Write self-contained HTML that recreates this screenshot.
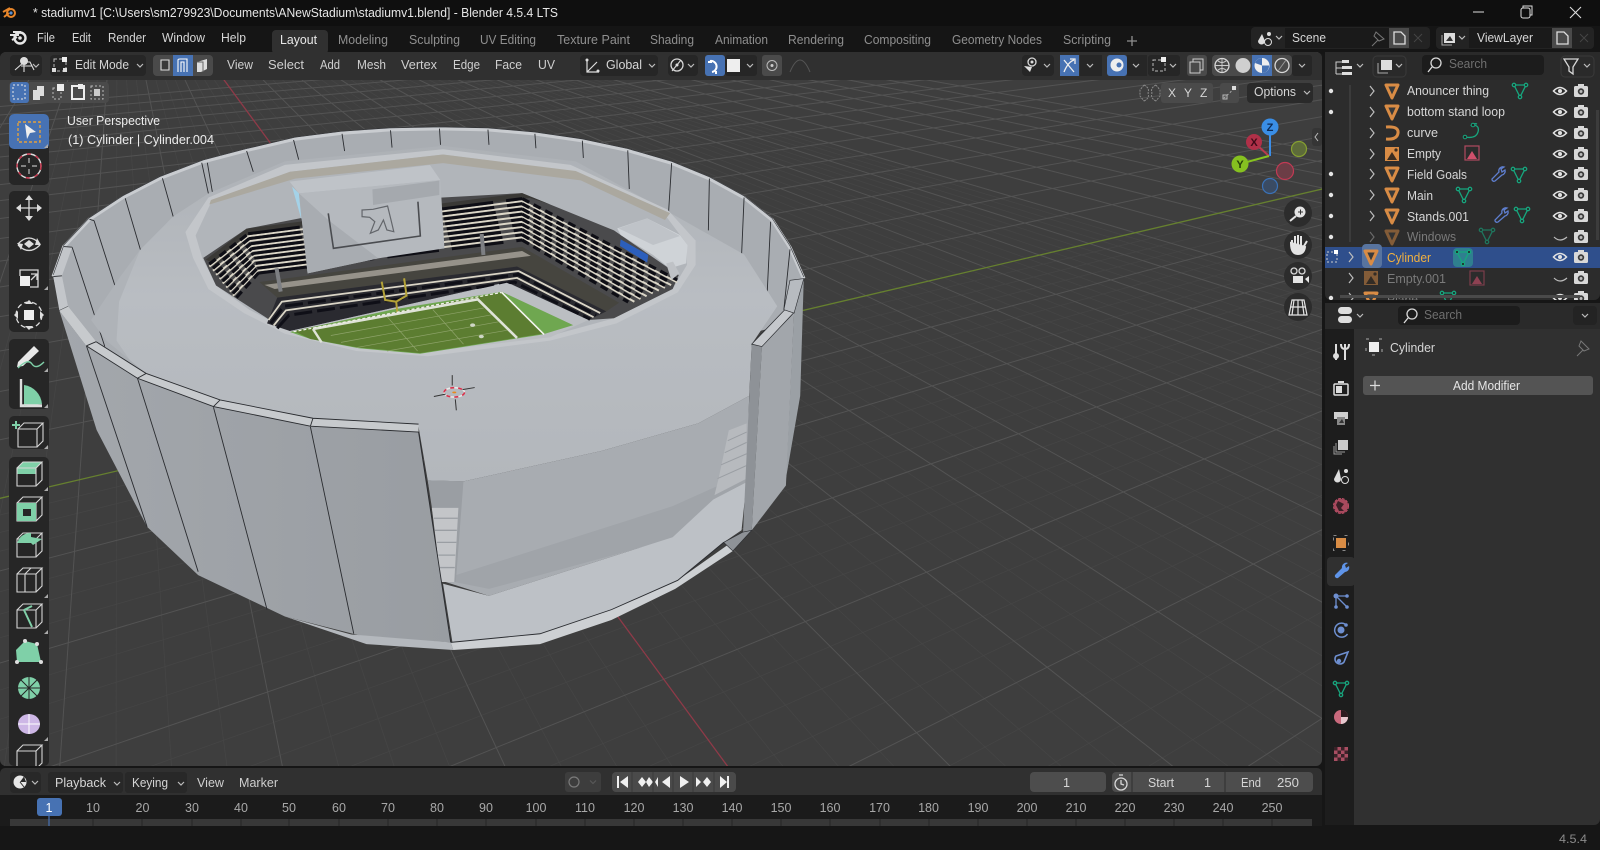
<!DOCTYPE html>
<html><head><meta charset="utf-8"><title>Blender</title>
<style>
html,body{margin:0;padding:0;background:#161616;overflow:hidden}
svg{display:block;font-family:"Liberation Sans",sans-serif}
text{font-size:12.5px;fill:#d6d6d6}
.st *{vector-effect:non-scaling-stroke}
.mu{fill:#cfcfcf}
.tab{fill:#8f8f8f}
.l{stroke:#2a2c30;stroke-width:.9;fill:none}
.ic{fill:none;stroke:#d8d8d8;stroke-width:1.3}
.cub{fill:none;stroke:#d6d6d6;stroke-width:1.1}
.gr{fill:#7fd0a8}
.chev{fill:none;stroke:#bdbdbd;stroke-width:1.2}
.btn{fill:#262626}
</style></head><body>
<svg width="1600" height="850" viewBox="0 0 1600 850" xmlns="http://www.w3.org/2000/svg">
<defs>
<clipPath id="vp"><rect x="0" y="52" width="1322" height="714" rx="6"/></clipPath>
<clipPath id="ol"><rect x="1325" y="52" width="275" height="248"/></clipPath>
<linearGradient id="dome" x1="0" y1="0" x2="0" y2="1"><stop offset="0" stop-color="#adb1b6"/><stop offset=".45" stop-color="#b9bdc2"/><stop offset="1" stop-color="#b3b7bc"/></linearGradient>
<linearGradient id="pan" x1="0" y1="0" x2="1" y2="0"><stop offset="0" stop-color="#a3a7ac"/><stop offset="1" stop-color="#999da2"/></linearGradient>
<g id="tri"><path d="M-6 -6H6L0 7Z" fill="#3a3a3a" stroke="#d98c45" stroke-width="3" stroke-linejoin="round"/></g>
<g id="mesh" fill="none" stroke="#17a67e" stroke-width="1.3"><path d="M-6 -5H6L0 7Z"/><circle cx="-6" cy="-5" r="1.7" fill="#222"/><circle cx="6" cy="-5" r="1.7" fill="#222"/><circle cx="0" cy="7" r="1.7" fill="#222"/></g>
<g id="eye"><path d="M-6.5 0Q0 -7 6.5 0Q0 7 -6.5 0Z" fill="none" stroke="#e2e2e2" stroke-width="1.6"/><circle r="2" fill="#e2e2e2"/></g>
<g id="cam"><rect x="-7" y="-5" width="14" height="11" rx="1.5" fill="#d8d8d8"/><rect x="-3" y="-7" width="6" height="3" fill="#d8d8d8"/><circle cy="0.5" r="3.2" fill="#3a3a3a"/><circle cy="0.5" r="1.5" fill="#bbb"/></g>
<g id="wr"><path d="M6 -7A4 4 0 0 0 1 -2L-6 5A2 2 0 0 0 -3 7L4 1A4 4 0 0 0 7 -4L4 -2L3 -5Z" fill="none" stroke="#5f7fd0" stroke-width="1.3"/></g>
<g id="emp"><rect x="-7" y="-7" width="14" height="14" fill="#d98c45"/><path d="M-5 6L0 -2L5 6Z" fill="#3a2c20"/><circle cx="4" cy="-4" r="1.6" fill="#3a2c20"/></g>
<g id="empc"><rect x="-7" y="-7" width="14" height="14" fill="none" stroke="#b04a60" stroke-width="1.2"/><path d="M-5 6L0 -2L5 6Z" fill="#d0506c"/></g>
<g id="cube"><path class="cub" d="M-12 -6H7V12H-12ZM-12 -6L-6 -12H13L7 -6M13 -12V6L7 12"/></g>
</defs>

<rect width="1600" height="850" fill="#161616"/>
<rect width="1600" height="26" fill="#0f0f0f"/>
<rect y="26" width="1600" height="28" fill="#151515"/>

<!-- title -->
<g transform="translate(10 13)"><circle r="4" cx="1" fill="none" stroke="#e8862a" stroke-width="2"/><path d="M-7 -1L0 -5M-6 4L-1 0" stroke="#e8862a" stroke-width="2"/><circle cx="1" r="1.6" fill="#5a8fd0"/></g>
<text x="33" y="17" textLength="525" lengthAdjust="spacingAndGlyphs" style="fill:#e6e6e6">* stadiumv1 [C:\Users\sm279923\Documents\ANewStadium\stadiumv1.blend] - Blender 4.5.4 LTS</text>
<path d="M1473 12H1484" stroke="#ddd" stroke-width="1"/>
<rect x="1521" y="8" width="9" height="10" rx="2" fill="none" stroke="#ddd"/><path d="M1523 8V6H1532V15H1530" fill="none" stroke="#ddd"/>
<path d="M1570 7L1581 18M1581 7L1570 18" stroke="#ddd" stroke-width="1.1"/>

<!-- top bar -->
<g transform="translate(19 38)"><circle cx="1" r="5.5" fill="none" stroke="#e6e6e6" stroke-width="2.4"/><path d="M-9 -3H0M-7 2L-2 -1M-6 -6H2" stroke="#e6e6e6" stroke-width="2"/><circle cx="1" r="1.8" fill="#e6e6e6"/></g>
<text x="37" y="42" textLength="18" lengthAdjust="spacingAndGlyphs">File</text>
<text x="72" y="42" textLength="19" lengthAdjust="spacingAndGlyphs">Edit</text>
<text x="108" y="42" textLength="38" lengthAdjust="spacingAndGlyphs">Render</text>
<text x="162" y="42" textLength="43" lengthAdjust="spacingAndGlyphs">Window</text>
<text x="221" y="42" textLength="25" lengthAdjust="spacingAndGlyphs">Help</text>
<rect x="272" y="30" width="56" height="24" rx="4" fill="#303030"/>
<text x="280" y="44" textLength="37" lengthAdjust="spacingAndGlyphs" style="fill:#e8e8e8">Layout</text>
<text class="tab" x="338" y="44" textLength="50" lengthAdjust="spacingAndGlyphs">Modeling</text>
<text class="tab" x="409" y="44" textLength="51" lengthAdjust="spacingAndGlyphs">Sculpting</text>
<text class="tab" x="480" y="44" textLength="56" lengthAdjust="spacingAndGlyphs">UV Editing</text>
<text class="tab" x="557" y="44" textLength="73" lengthAdjust="spacingAndGlyphs">Texture Paint</text>
<text class="tab" x="650" y="44" textLength="44" lengthAdjust="spacingAndGlyphs">Shading</text>
<text class="tab" x="715" y="44" textLength="53" lengthAdjust="spacingAndGlyphs">Animation</text>
<text class="tab" x="788" y="44" textLength="56" lengthAdjust="spacingAndGlyphs">Rendering</text>
<text class="tab" x="864" y="44" textLength="67" lengthAdjust="spacingAndGlyphs">Compositing</text>
<text class="tab" x="952" y="44" textLength="90" lengthAdjust="spacingAndGlyphs">Geometry Nodes</text>
<text class="tab" x="1063" y="44" textLength="48" lengthAdjust="spacingAndGlyphs">Scripting</text>
<path d="M1127 41H1137M1132 36V46" stroke="#8f8f8f" stroke-width="1.3"/>
<!-- scene selectors -->
<rect x="1251" y="27" width="179" height="22" rx="4" fill="#232323"/>
<rect x="1285" y="28" width="104" height="20" fill="#1a1a1a"/>
<rect x="1389" y="28" width="20" height="20" fill="#4a4a4a"/>
<path d="M1262 34L1258 41A3.5 3.5 0 0 0 1265 41Z" fill="#ddd"/><circle cx="1269" cy="34" r="2" fill="#ddd"/><circle cx="1268" cy="42" r="3.5" fill="none" stroke="#ddd"/>
<path class="chev" d="M1276 36L1279 39L1282 36"/>
<text x="1292" y="42" textLength="34" lengthAdjust="spacingAndGlyphs">Scene</text>
<path d="M1372 46L1378 40M1376 32L1384 39L1379 41L1374 36Z" fill="none" stroke="#777"/>
<path d="M1394 32H1401L1405 36V44H1394Z" fill="none" stroke="#ddd" stroke-width="1.3"/>
<path d="M1414 34L1422 42M1422 34L1414 42" stroke="#444"/>
<rect x="1436" y="27" width="158" height="22" rx="4" fill="#232323"/>
<rect x="1469" y="28" width="83" height="20" fill="#1a1a1a"/>
<rect x="1552" y="28" width="20" height="20" fill="#4a4a4a"/>
<rect x="1444" y="33" width="11" height="10" fill="#ddd"/><path d="M1442 35V45H1452" fill="none" stroke="#aaa"/><path d="M1446 41L1450 36L1453 41Z" fill="#333"/>
<path class="chev" d="M1459 36L1462 39L1465 36"/>
<text x="1477" y="42" textLength="56" lengthAdjust="spacingAndGlyphs">ViewLayer</text>
<path d="M1557 32H1564L1568 36V44H1557Z" fill="none" stroke="#ddd" stroke-width="1.3"/>
<path d="M1580 34L1588 42M1588 34L1580 42" stroke="#444"/>

<!-- VIEWPORT -->
<g clip-path="url(#vp)">
<rect x="0" y="52" width="1322" height="714" fill="#3e3e3e"/>
<!-- minor grid -->
<path fill="none" stroke="#454545" stroke-width=".8" d="M117-66L850 850M117-66L911 850M117-66L972 850M117-66L1095 850M117-66L1156 850M117-66L1217 850M117-66L1340 850M117-66L1401 850M117-66L1462 850M117-66L1585 850M117-66L1646 850M117-66L1707 850M117-66L1830 850M117-66L1891 850M117-66L1952 850M117-66L2075 850M117-66L2136 850M117-66L2197 850M117-66L2320 850M117-66L2381 850M117-66L2442 850M117-66L2565 850M117-66L2626 850M117-66L2687 850M117-66L2810 850M117-66L2871 850M117-66L2932 850M117-66L3055 850M117-66L3116 850M117-66L3177 850M117-66L728 850M117-66L667 850M117-66L606 850M117-66L483 850M117-66L422 850M117-66L361 850M117-66L238 850M117-66L177 850M117-66L116 850M117-66L-7 850M117-66L-68 850M117-66L-129 850
M2600-110L354 850M2600-110L463 850M2600-110L573 850M2600-110L791 850M2600-110L900 850M2600-110L1010 850M2600-110L1228 850M2600-110L1337 850M2600-110L1447 850M2600-110L136 850M2600-110L26 850M2600-110L-83 850M2600-110L-301 850M2600-110L-410 850M2600-110L-520 850M2600-110L-738 850M2600-110L-847 850M2600-110L-957 850M2600-110L-1175 850M2600-110L-1285 850M2600-110L-1394 850"/>
<!-- major grid -->
<path fill="none" stroke="#535353" stroke-width="1" d="M117-66L-926 850M117-66L-681 850M117-66L-436 850M117-66L-191 850M117-66L54 850M117-66L299 850M117-66L544 850M117-66L1034 850M117-66L1279 850M117-66L1524 850M117-66L1769 850M117-66L2014 850M117-66L2259 850M117-66L2504 850M117-66L2749 850M117-66L2994 850M117-66L3239 850M117-66L3484 850M117-66L3729 850M117-66L3974 850M117-66L4219 850M117-66L4464 850M117-66L4709 850M117-66L4954 850M117-66L5199 850
M2600-110L-1066 850M2600-110L-629 850M2600-110L-192 850M2600-110L245 850M2600-110L682 850M2600-110L1119 850M2600-110L1556 850M2600-110L1993 850M2600-110L-1940 850M2600-110L-2377 850M2600-110L-2814 850M2600-110L-3251 850M2600-110L-3688 850M2600-110L-4125 850M2600-110L-4562 850M2600-110L-4999 850M2600-110L-5436 850M2600-110L-5873 850M2600-110L-6310 850M2600-110L-6747 850M2600-110L-7184 850M2600-110L-7621 850M2600-110L-8058 850M2600-110L-8495 850M2600-110L-8932 850"/>
<path d="M117 -66L789 850" stroke="#8f3a48" stroke-width="1.3"/>
<path d="M-1503 850L2600 -110" stroke="#66802f" stroke-width="1.3"/>

<!-- stadium -->
<g class="st" transform="translate(40 120) scale(.5102 .3448)">
<!-- back wall -->
<path d="M26 454L47 367L97 288L162 225L235 169L320 121L405 88L500 55L590 38L685 28L783 25L878 28L970 40L1063 60L1152 88L1238 125L1312 170L1380 225L1435 290L1470 370L1497 460L1480 560L1440 600L742 890L353 815L208 740L110 650L40 556Z" fill="#a9adb2"/>
<path d="M26 454L47 367L97 288L162 225L235 169L320 121L405 88L500 55L590 38L685 28L783 25L878 28L970 40L1063 60L1152 88L1238 125L1312 170L1380 225L1435 290L1470 370L1497 460" fill="none" stroke="#c9ccd0" stroke-width="3.500"/>
<path d="M26 454L47 367L97 288L162 225L235 169L320 121L405 88L500 55L590 38L685 28L783 25L878 28L970 40L1063 60L1152 88L1238 125L1312 170L1380 225L1435 290L1470 370L1497 460" fill="none" stroke="#2e3034" stroke-width=".6" transform="translate(0 -5)"/>
<path class="l" d="M63 369L127 657M106 292L157 527M167 227L197 377M240 169L261 280M317 124L330 213M328 124L338 210M405 90L418 150M497 58L507 115M592 40L597 90M687 30L690 80M783 25L785 72M878 28L880 72M970 40L972 82M1063 60L1065 110M1152 88L1155 200M1238 125L1232 268M1312 170L1310 320M1380 225L1375 395M1432 295L1425 510M1470 375L1458 550"/>
<!-- left rim end -->
<path d="M26 454L47 367L63 369L43 452L55 541L110 643L91 655L38 553Z" fill="#c3c6ca"/>
<path class="l" d="M47 367L63 369M26 454L43 452M38 553L55 541M97 288L106 292"/>
<!-- soft dome shoulder -->
<path d="M100 580L157 455L196 377L157 527L155 640L176 696L130 640Z" fill="#afb3b8"/>
<!-- dome -->
<path d="M176 696L150 640L155 527L196 377L261 280L330 213L480 120L790 75L1050 120L1230 265L1380 390L1445 540L1395 650L1390 800L1290 880L1100 960L830 1048L760 1045L742 890L530 865L340 825L208 735Z" fill="url(#dome)"/>
<!-- ledge -->
<path d="M285 325L330 225L480 130L790 85L1040 130L1230 260L1285 350L1285 420L1250 500L1130 590L1000 640L760 685L620 670L480 620L400 560L330 490L300 400Z" fill="#c3c6ca"/>
<!-- interior wall -->
<path d="M305 335L335 240L490 150L790 100L1040 148L1225 275L1268 360L1268 420L1240 490L1125 575L995 628L755 672L625 658L490 610L410 550L345 480L318 400Z" fill="#b1b5ba"/>
<path d="M335 232L490 150L790 100L1050 148L1235 270L1225 290L1060 175L790 125L500 170L332 245Z" fill="#aba89f"/>
<!-- seats -->
<path d="M320 400L405 315L510 285L785 225L945 212L1125 320L1252 450L1240 490L1125 575L1075 580L915 470L490 612L470 600L440 570L345 480Z" fill="#4a4a4c"/>
<path d="M325 405L405 315L945 212L1000 245L960 226L430 325L345 420Z" fill="#3a3936"/>
<!-- cream rows -->
<path fill="none" stroke="#dcd7c8" stroke-width="2" transform="translate(0 7)" d="M332 418L408 330L945 228L1249 464M339 430L410 344L945 243L1237 472M345 442L413 359L945 258L1225 480M352 454L415 373L945 273L1213 488M358 467L418 387L945 288L1201 496M365 479L420 401L945 303L1189 504M372 491L423 416L945 318L1177 512M378 503L426 430L945 333L1165 520"/>
<!-- dark dashes, sides -->
<path fill="none" stroke="#0e0e15" stroke-width="3.200" stroke-dasharray="8 5" d="M332 418L408 330M945 228L1249 464M339 430L410 344M945 243L1237 472M345 442L413 359M945 258L1225 480M352 454L415 373M945 273L1213 488M358 467L418 387M945 288L1201 496M365 479L420 401M945 303L1189 504M372 491L423 416M945 318L1177 512M378 503L426 430M945 333L1165 520M385 515L428 444M945 348L1153 528"/>
<!-- dark dashes, centre -->
<path fill="none" stroke="#0e0e15" stroke-width="3" stroke-dasharray="52 13" d="M408 330L945 228M410 344L945 243M413 359L945 258M415 373L945 273M418 387L945 288M420 401L945 303M423 416L945 318M426 430L945 333M428 444L945 348"/>
<!-- concourse -->
<path d="M430 470L945 368L1135 530L1110 555L935 425L465 515Z" fill="#46453f"/>
<path d="M440 478L945 380L962 394L460 490Z" fill="#96928a"/>
<!-- lower tier -->
<path d="M465 515L935 425L1110 555L1075 580L915 470L490 612L445 590Z" fill="#2a2a30"/>
<g fill="none" stroke="#dad5c6" stroke-width="1.800">
<path d="M448 580L474 527L938 438L1098 560"/>
<path d="M458 596L482 552L935 458L1085 572"/>
</g>
<g fill="none" stroke="#0f0f17" stroke-width="3" stroke-dasharray="18 5">
<path d="M452 590L478 540L938 448L1090 566"/>
<path d="M465 604L488 566L930 470L1078 578"/>
</g>
<!-- concrete -->
<path d="M490 612L915 472L1075 580L1000 630L760 672L625 658Z" fill="#bbbec2"/>
<!-- field -->
<path d="M490 615L690 550L905 498L1045 595L985 622L745 678L625 662L530 635Z" fill="#6fa750"/>
<path d="M497 612L905 500L985 620L745 676L625 660L530 635Z" fill="#5c7d31"/>
<path d="M535 606L858 520L935 632" fill="none" stroke="#dfe3d8" stroke-width="2.600"/>
<path d="M535 606L552 645" stroke="#dfe3d8" stroke-width="2.400"/>
<path d="M905 500L988 622" stroke="#f4f4f0" stroke-width="1.600"/>
<path d="M497 614L905 500" stroke="#f0f0e8" stroke-width="1.200" stroke-dasharray="3 2"/>
<g stroke="#8ea36a" stroke-width=".7"><path d="M570 625L870 545M590 645L885 565M620 660L900 585M680 670L915 610M680 570L740 670M770 550L830 650"/></g>
<circle cx="848" cy="595" r="5" fill="#cfd6c6"/><circle cx="865" cy="628" r="5" fill="#cfd6c6"/>
</g>

<g class="st" transform="translate(180 130) scale(.3448 .3333)">
<path d="M585 455L595 510L627 515L657 497L650 445M627 515L630 545" fill="none" stroke="#b3a238" stroke-width="2"/>
<path d="M875 312L880 375" stroke="#7d7f83" stroke-width="4"/>
<path d="M280 415L292 485" stroke="#7d7f83" stroke-width="4"/>
<path d="M325 170L345 190L352 268Z" fill="#a4d2e8"/>
<path d="M318 155L725 105L755 150L345 190Z" fill="#bfc3c8"/>
<path d="M345 190L755 150L767 355L575 385L370 430Z" fill="#b5b9be"/>
<path d="M345 190L430 270L575 385L370 430Z" fill="#a8acb1"/>
<path d="M558 178L752 152V195L560 225Z" fill="#a5a9ae"/>
<path d="M430 250L445 355L697 318L690 215" fill="none" stroke="#4a4c50" stroke-width="1.600"/>
<path d="M528 240L560 238L602 228L612 270L620 305L600 300L590 270L575 300L552 310L565 275L550 262L528 260Z" fill="none" stroke="#63666b" stroke-width="1.200"/>
<path d="M1268 295L1355 265L1450 315L1472 345L1468 400L1420 415L1372 375L1278 315Z" fill="#cfd3d7"/>
<path d="M1272 295L1355 265L1450 318L1372 345Z" fill="#bfc3c8"/>
<path d="M1278 328L1358 375L1355 398L1276 348Z" fill="#2c5fbc"/>
<path d="M1410 400L1430 395L1448 430L1425 450Z" fill="#bfc2c6"/>
</g>

<g class="st" transform="translate(40 120) scale(.5102 .3448)">
<!-- glass -->
<path d="M760 1045L830 1048L1100 960L1290 880L1390 800L1385 1050L1320 1100L1240 1210L880 1380L795 1340Z" fill="#a8acb1"/>
<path d="M815 1320L1240 1120L1390 1020L1385 1050L1320 1100L1240 1215L880 1360L812 1340Z" fill="#a0a4a9"/>
<path d="M760 1045L830 1048L815 1340L790 1340Z" fill="#9a9ea3"/>
<path d="M768 1125H820L812 1340H786Z" fill="#c3c5c8"/>
<g stroke="#9a9ea3" stroke-width="1.300"><path d="M772 1155H819M774 1190H817M778 1225H816M781 1262H814M784 1298H813"/></g>
<path d="M1350 900L1385 880V1040L1322 1088L1330 1040Z" fill="#b7babe"/>
<g stroke="#9a9ea3" stroke-width="1"><path d="M1348 930L1385 905M1342 965L1385 935M1335 1000L1385 968M1328 1040L1385 1002"/></g>
<!-- plaza -->
<path d="M790 1345L880 1380L1240 1210L1320 1100L1385 1050L1375 1190L1340 1225L1250 1335L1120 1420L980 1490L810 1530Z" fill="#bdc1c6"/>
<path d="M805 1515L980 1490L1120 1420L1250 1335L1355 1225L1358 1250L1245 1360L1120 1450L980 1520L810 1537Z" fill="#cdd0d3"/>
<path class="l" d="M805 1515L980 1490L1120 1420L1250 1335L1340 1225"/>
<!-- right panels -->
<path d="M1497 460L1490 800L1462 1040L1478 560Z" fill="#9ba0a5"/>
<path d="M1415 655L1478 560L1462 1060L1395 1190Z" fill="#a2a6ab"/>
<path d="M1395 650L1415 655L1395 1190L1378 1195Z" fill="#8e9297"/>
<path d="M1395 650L1460 550L1478 558L1415 657Z" fill="#c5c8cc" stroke="#2a2c30" stroke-width=".7"/>
<path d="M1458 550L1470 465L1497 460L1478 560Z" fill="#b7bbc0" stroke="#2a2c30" stroke-width=".6"/>
<path d="M1378 1195L1340 1225L1358 1250L1395 1190Z" fill="#8e9297" stroke="#2a2c30" stroke-width=".6"/>
<!-- left front panels -->
<path d="M38 553L91 655L191 749L340 831L530 888L742 905L805 1515L640 1500L480 1440L310 1320L210 1180L111 899Z" fill="url(#pan)"/>
<path d="M480 1440L610 1492L805 1515L810 1537L640 1520Z" fill="#b4b8bd"/>
<path d="M55 541L110 643L208 735L353 812L535 865L742 882L742 905L530 888L340 831L191 749L91 655L38 553Z" fill="#c7cacd"/>
<path class="l" d="M110 643L208 735L353 812L535 865L742 882M91 655L191 749L340 831L530 888L742 905M191 749L208 735M340 831L353 812M530 888L535 865M91 655L110 643"/>
<path class="l" d="M191 749L310 1310M340 833L445 1420M530 890L615 1490M91 655L210 1180M742 905L805 1515"/>
<!-- 3d cursor -->
<circle cx="812" cy="790" r="20" fill="none" stroke="#e8e8e8" stroke-width="1.600" transform="translate(812 790) scale(1 .68) translate(-812 -790)"/>
<circle cx="812" cy="790" r="20" fill="none" stroke="#d8324c" stroke-width="1.600" stroke-dasharray="4 4" transform="translate(812 790) scale(1 .68) translate(-812 -790)"/>
<path d="M808 740V770M814 810L816 842M772 802L795 795M828 782L852 776" stroke="#333" stroke-width="1"/>
<circle cx="812" cy="790" r="4" fill="#e88a1a" transform="translate(812 790) scale(1 .68) translate(-812 -790)"/>
</g>

<!-- overlay text -->
<text x="67" y="125" textLength="93" lengthAdjust="spacingAndGlyphs" style="fill:#ececec">User Perspective</text>
<text x="68" y="144" textLength="146" lengthAdjust="spacingAndGlyphs" style="fill:#ececec">(1) Cylinder | Cylinder.004</text>

<!-- toolbar -->
<g>
<rect x="9" y="114" width="40" height="71" rx="5" fill="#262626"/>
<rect x="9" y="114" width="40" height="35" rx="5" fill="#4772b3"/>
<rect x="18" y="122" width="22" height="20" fill="none" stroke="#e0a040" stroke-width="1.400" stroke-dasharray="3 2"/>
<path d="M25 124L36 132L30 133L27 139Z" fill="#eee"/>
<circle cx="29" cy="166" r="12" fill="none" stroke="#ddd" stroke-width="1.400"/><circle cx="29" cy="166" r="12" fill="none" stroke="#c8324a" stroke-width="1.400" stroke-dasharray="4 5"/><path d="M29 158V163M29 169V174M21 166H26M32 166H37" stroke="#ddd"/>

<rect x="9" y="191" width="40" height="141" rx="5" fill="#262626"/>
<path d="M29 198V218M19 208H39" stroke="#ddd" stroke-width="1.300"/><path d="M29 195L33 200H25ZM29 221L33 216H25ZM16 208L21 204V212ZM42 208L37 204V212Z" fill="#ddd"/>
<path d="M18 244Q29 232 40 244M18 245Q29 256 40 245" class="ic"/><path d="M29 240L34 244L29 248L24 244Z" fill="#ddd"/><path d="M37 238L41 245L35 245ZM21 250L17 243L23 244Z" fill="#ddd"/>
<rect x="20" y="276" width="10" height="10" fill="#eee"/><path class="ic" d="M20 276V270H38V287H30"/><path d="M31 274H37V280M37 274L31 280" class="ic"/>
<circle cx="29" cy="315" r="13" fill="none" stroke="#ddd" stroke-width="1.300" stroke-dasharray="5 3"/><rect x="24" y="310" width="10" height="10" fill="#eee"/><path d="M29 300L33 304H25ZM29 330L33 326H25ZM14 315L18 311V319ZM44 315L40 311V319Z" fill="#ddd"/>

<rect x="9" y="339" width="40" height="70" rx="5" fill="#262626"/>
<path d="M18 362L34 346L39 351L23 366L17 367Z" fill="#e8e8e8"/><path d="M18 368Q28 358 32 364T44 362" fill="none" stroke="#7fd0a8" stroke-width="1.400"/>
<path d="M21 379V406H42" fill="none" stroke="#ddd" stroke-width="2.400"/><path d="M24 406V385A21 21 0 0 1 42 404Z" class="gr"/><path d="M21 405H42" stroke="#ddd" stroke-width="1.400"/>

<rect x="9" y="416" width="40" height="33" rx="5" fill="#262626"/>
<g transform="translate(30 435)"><use href="#cube"/><path d="M-14 -14V-6M-18 -10H-10" stroke="#7fd0a8" stroke-width="2"/></g>

<rect x="9" y="457" width="40" height="309" rx="5" fill="#262626"/>
<g transform="translate(29 474)"><path class="gr" d="M-12 -6L-6 -12H13L7 -6H-12ZM-12 -6H7V0H-12Z"/><use href="#cube"/></g>
<g transform="translate(29 509)"><use href="#cube"/><path class="gr" d="M-12 -6H7V12H-12ZM-6 0V7H2V0Z" fill-rule="evenodd"/></g>
<g transform="translate(29 545)"><use href="#cube"/><path class="gr" d="M-10 -6Q-6 -12 2 -12L2 -8L13 -6L4 0L2 -2H-12Z"/></g>
<g transform="translate(29 580)"><use href="#cube"/><path class="cub" d="M-4 12V-6L2 -12"/></g>
<g transform="translate(29 616)"><use href="#cube"/><path d="M-5 -6L3 -10M-5 -6L3 11" stroke="#7fd0a8" stroke-width="2"/></g>
<g transform="translate(29 652)"><path class="gr" d="M-12 10L-13 -2L-4 -11L8 -8L12 10Z"/><circle cx="-12" cy="10" r="2" fill="#ddd"/><circle cx="12" cy="10" r="2" fill="#ddd"/><circle cx="-4" cy="-11" r="2" fill="#ddd"/><circle cx="8" cy="-8" r="2" fill="#ddd"/></g>
<g transform="translate(29 688)"><circle r="11" class="gr"/><path d="M-11 0H11M0 -11V11M-8 -8L8 8M-8 8L8 -8" stroke="#262626"/></g>
<g transform="translate(29 724)"><ellipse rx="11" ry="10" fill="#cdb7e6"/><path d="M-11 0H11M0 -10V10" stroke="#fff"/></g>
<g transform="translate(29 757)"><use href="#cube"/></g>
<g fill="#aaa"><path d="M48 148L44 148L48 144Z"/><path d="M48 290L44 290L48 286Z"/><path d="M48 372L44 372L48 368Z"/><path d="M48 408L44 408L48 404Z"/><path d="M48 449L44 449L48 445Z"/><path d="M48 491L44 491L48 487Z"/><path d="M48 598L44 598L48 594Z"/><path d="M48 634L44 634L48 630Z"/><path d="M48 741L44 741L48 737Z"/></g>
</g>

<!-- gizmo -->
<path d="M1270 135V156" stroke="#3b8ee8" stroke-width="2"/><path d="M1258 146L1269 156" stroke="#b83a50" stroke-width="2"/><path d="M1247 162L1269 156" stroke="#86c120" stroke-width="2"/>
<circle cx="1270" cy="127" r="8.500" fill="#3a8ee6"/><text x="1270" y="131" text-anchor="middle" style="fill:#0c2a55;font-size:11px;font-weight:bold">Z</text>
<circle cx="1254" cy="142" r="8" fill="#b03048"/><text x="1254" y="146" text-anchor="middle" style="fill:#3f0a18;font-size:11px;font-weight:bold">X</text>
<circle cx="1240" cy="164" r="8.500" fill="#86c120"/><text x="1240" y="168" text-anchor="middle" style="fill:#25400a;font-size:11px;font-weight:bold">Y</text>
<circle cx="1299" cy="149" r="7.500" fill="#5d6b3a" stroke="#86a030" stroke-width="1.200"/>
<circle cx="1285" cy="171" r="8.500" fill="#6c3d46" stroke="#c23a54" stroke-width="1.200"/>
<circle cx="1270" cy="186" r="7.500" fill="#3a4b63" stroke="#3a72b8" stroke-width="1.200"/>
<g fill="#2c2c2c">
<circle cx="1298" cy="213" r="14"/><circle cx="1298" cy="245" r="14"/><circle cx="1298" cy="276" r="14"/><circle cx="1298" cy="307" r="14"/></g>
<circle cx="1300" cy="212" r="5.500" fill="#e4e4e4"/><path d="M1298 212H1303M1300.500 209.500V214.500" stroke="#333"/><path d="M1296 216L1290 221" stroke="#e4e4e4" stroke-width="2"/>
<path d="M1292 246V240M1295 246V236M1298 246V235M1301 246V236M1304 246L1307 241M1291 243Q1291 254 1298 254Q1304 254 1305 247Z" stroke="#e4e4e4" stroke-width="2" fill="#e4e4e4"/>
<circle cx="1294" cy="271" r="3" class="ic"/><circle cx="1302" cy="271" r="3" class="ic"/><rect x="1293" y="276" width="10" height="7" fill="#e4e4e4"/><path d="M1305 279L1309 276V283Z" fill="#e4e4e4"/>
<path d="M1292 300H1304L1307 315H1289ZM1298 300V315M1290.500 307H1305.500M1294 300L1292 315M1302 300L1304 315" fill="none" stroke="#e4e4e4" stroke-width="1.200"/>
<rect x="1312" y="128" width="10" height="18" rx="3" fill="#353535"/><path d="M1318 133L1315 137L1318 141" fill="none" stroke="#bbb"/>

<!-- viewport header -->
<rect x="0" y="52" width="1322" height="28" fill="#303030"/>
</g>

<!-- header items -->
<rect x="10" y="55" width="32" height="21" rx="4" class="btn"/>
<path d="M15 70L24 62H30L34 70M21 66H32M24 57V72" fill="none" stroke="#ddd" stroke-width="1.100"/><circle cx="24" cy="61" r="4" fill="#ddd"/>
<path class="chev" d="M33 64L36 67L39 64"/>
<rect x="50" y="55" width="96" height="21" rx="4" class="btn"/>
<rect x="54" y="59" width="12" height="12" fill="none" stroke="#bbb" stroke-dasharray="3 2"/><rect x="62" y="57" width="5" height="5" fill="#eee"/><rect x="52" y="68" width="4" height="4" fill="#ddd"/><rect x="63" y="68" width="4" height="4" fill="#ddd"/>
<text x="75" y="69" textLength="54" lengthAdjust="spacingAndGlyphs">Edit Mode</text>
<path class="chev" d="M137 64L140 67L143 64"/>
<rect x="153" y="55" width="60" height="21" rx="4" fill="#4a4a4a"/>
<rect x="173" y="55" width="20" height="21" fill="#4772b3"/>
<path d="M161 60H169V70H161Z" fill="#3a3a3a" stroke="#ddd" stroke-width="1.100"/>
<path d="M178 72V60Q178 59 180 59H187V72M181 72V62H184V72" fill="none" stroke="#fff" stroke-width="1.100"/>
<path d="M197 62L207 59V69L201 72H197Z" fill="#ddd"/><path d="M197 62H203V72" fill="none" stroke="#666"/>
<text class="mu" x="227" y="69" textLength="26" lengthAdjust="spacingAndGlyphs">View</text>
<text class="mu" x="268" y="69" textLength="36" lengthAdjust="spacingAndGlyphs">Select</text>
<text class="mu" x="320" y="69" textLength="20" lengthAdjust="spacingAndGlyphs">Add</text>
<text class="mu" x="357" y="69" textLength="29" lengthAdjust="spacingAndGlyphs">Mesh</text>
<text class="mu" x="401" y="69" textLength="36" lengthAdjust="spacingAndGlyphs">Vertex</text>
<text class="mu" x="453" y="69" textLength="27" lengthAdjust="spacingAndGlyphs">Edge</text>
<text class="mu" x="495" y="69" textLength="27" lengthAdjust="spacingAndGlyphs">Face</text>
<text class="mu" x="538" y="69" textLength="17" lengthAdjust="spacingAndGlyphs">UV</text>
<rect x="580" y="55" width="78" height="21" rx="4" class="btn"/>
<path d="M587 60V72H599M587 72L597 62" fill="none" stroke="#ddd" stroke-width="1.200"/><circle cx="587" cy="60" r="1.500" fill="#ddd"/><circle cx="598" cy="71" r="1.500" fill="#ddd"/>
<text x="606" y="69" textLength="36" lengthAdjust="spacingAndGlyphs">Global</text>
<path class="chev" d="M649 64L652 67L655 64"/>
<rect x="668" y="55" width="30" height="21" rx="4" class="btn"/>
<circle cx="677" cy="65" r="6" class="ic"/><path d="M672 71L681 60" stroke="#ddd"/><circle cx="677" cy="65" r="1.500" fill="#ddd"/>
<path class="chev" d="M688 64L691 67L694 64"/>
<rect x="705" y="55" width="20" height="21" rx="3" fill="#4772b3"/>
<path d="M710 61A5.500 5.500 0 1 1 712 72M708 62H712M716 71V74" fill="none" stroke="#fff" stroke-width="2"/>
<rect x="725" y="55" width="32" height="21" rx="3" class="btn"/>
<rect x="727" y="59" width="13" height="13" fill="#eee"/>
<path class="chev" d="M747 64L750 67L753 64"/>
<rect x="762" y="55" width="20" height="21" rx="3" fill="#4a4a4a"/><circle cx="772" cy="65.500" r="5" fill="none" stroke="#bbb"/><circle cx="772" cy="65.500" r="1.500" fill="#ccc"/>
<path d="M790 72Q795 60 800 60Q805 60 810 72" fill="none" stroke="#555"/>

<rect x="1022" y="55" width="32" height="21" rx="4" class="btn"/>
<circle cx="1032" cy="62" r="4" class="ic"/><circle cx="1032" cy="62" r="1.500" fill="#ddd"/><path d="M1024 66L1030 72L1032 67Z" fill="#ddd"/><path class="chev" d="M1044 64L1047 67L1050 64"/>
<rect x="1060" y="55" width="19" height="21" fill="#4772b3"/><path d="M1064 72Q1068 62 1074 60M1064 60L1074 72M1070 59H1075V64" fill="none" stroke="#eee" stroke-width="1.300"/>
<rect x="1080" y="55" width="22" height="21" class="btn"/><path class="chev" d="M1087 64L1090 67L1093 64"/>
<rect x="1107" y="55" width="20" height="21" rx="3" fill="#4772b3"/><circle cx="1117" cy="65" r="6.500" fill="#eee"/><circle cx="1119" cy="65" r="2.500" fill="#4772b3"/>
<rect x="1127" y="55" width="20" height="21" class="btn"/><path class="chev" d="M1133 64L1136 67L1139 64"/>
<rect x="1148" y="55" width="32" height="21" rx="3" class="btn"/>
<rect x="1153" y="60" width="12" height="11" fill="none" stroke="#bbb" stroke-dasharray="3 2"/><rect x="1161" y="57" width="5" height="5" fill="#eee"/><path class="chev" d="M1170 64L1173 67L1176 64"/>
<rect x="1187" y="55" width="20" height="21" rx="3" fill="#4a4a4a"/><rect x="1193" y="59" width="10" height="11" fill="none" stroke="#ccc"/><rect x="1190" y="62" width="10" height="11" fill="#4a4a4a" stroke="#ccc"/>
<rect x="1212" y="55" width="80" height="21" rx="4" fill="#4a4a4a"/>
<rect x="1252" y="55" width="20" height="21" fill="#4772b3"/>
<circle cx="1222" cy="65.500" r="7" class="ic"/><path d="M1215 65.500H1229M1222 58.500V72.500M1217 60Q1222 65 1227 60M1217 71Q1222 66 1227 71" fill="none" stroke="#ccc" stroke-width=".9"/>
<circle cx="1243" cy="65.500" r="7.500" fill="#cfcfcf"/>
<circle cx="1262" cy="65.500" r="7.500" fill="#eee"/><path d="M1262 65.500L1269 65.500A7 7 0 0 1 1262 73Z" fill="#4772b3"/><path d="M1262 65.500V58A7.500 7.500 0 0 0 1255 63Z" fill="#4772b3"/>
<circle cx="1282" cy="65.500" r="7" class="ic"/><path d="M1278 71L1286 60" stroke="#999"/>
<rect x="1292" y="55" width="20" height="21" rx="3" class="btn"/><path class="chev" d="M1299 64L1302 67L1305 64"/>

<!-- row 2 -->
<rect x="9" y="82" width="100" height="21" rx="4" fill="#4a4a4a"/>
<rect x="10" y="82" width="19" height="21" rx="3" fill="#4772b3"/>
<rect x="13" y="85" width="12" height="14" fill="none" stroke="#e8e8e8" stroke-dasharray="2 2"/>
<path d="M33 90H37V86H44V96H40V100H33Z" fill="#ddd"/>
<path d="M53 88H61V99H53Z" fill="none" stroke="#bbb" stroke-dasharray="2 2"/><rect x="57" y="84" width="7" height="7" fill="#eee"/>
<rect x="72" y="86" width="12" height="13" fill="none" stroke="#eee" stroke-width="2"/><rect x="78" y="84" width="5" height="5" fill="#eee"/>
<rect x="91" y="86" width="12" height="13" fill="none" stroke="#bbb" stroke-dasharray="2 2"/><rect x="94" y="89" width="6" height="7" fill="#ccc"/>

<path d="M1144 85Q1150 88 1148 93Q1150 98 1144 101M1156 85Q1150 88 1152 93Q1150 98 1156 101M1144 85L1140 90V96L1144 101M1156 85L1160 90V96L1156 101" fill="none" stroke="#888" stroke-dasharray="2 1"/>
<rect x="1161" y="83" width="52" height="20" rx="3" fill="#4a4a4a"/>
<text x="1168" y="97" style="font-size:12px">X</text><text x="1184" y="97" style="font-size:12px">Y</text><text x="1200" y="97" style="font-size:12px">Z</text>
<rect x="1220" y="83" width="19" height="20" rx="3" fill="#4a4a4a"/><path d="M1224 98L1236 87" stroke="#aaa" stroke-dasharray="2 2"/><rect x="1223" y="95" width="4" height="4" fill="none" stroke="#bbb"/><rect x="1232" y="86" width="4" height="4" fill="#ddd"/>
<rect x="1247" y="83" width="66" height="20" rx="4" fill="#2a2a2a"/>
<text x="1254" y="96" textLength="42" lengthAdjust="spacingAndGlyphs">Options</text>
<path class="chev" d="M1304 91L1307 94L1310 91"/>

<!-- OUTLINER -->
<rect x="1325" y="52" width="275" height="248" rx="6" fill="#2c2c2c"/>
<g clip-path="url(#ol)">
<rect x="1325" y="52" width="275" height="28" fill="#2a2a2a"/>
<path d="M1336 74V62H1342M1336 68H1342M1336 74H1342" fill="none" stroke="#ccc"/><rect x="1342" y="60" width="7" height="3" fill="#ddd"/><rect x="1342" y="66" width="10" height="3" fill="#ddd"/><rect x="1342" y="72" width="10" height="3" fill="#ddd"/>
<path class="chev" d="M1357 64L1360 67L1363 64"/>
<rect x="1373" y="56" width="33" height="21" rx="4" fill="none" stroke="#3a3a3a"/>
<rect x="1381" y="60" width="11" height="10" fill="#ddd"/><path d="M1378 63V73H1388" fill="none" stroke="#aaa"/><path class="chev" d="M1396 64L1399 67L1402 64"/>
<rect x="1422" y="55" width="122" height="20" rx="4" fill="#1c1c1c"/>
<circle cx="1436" cy="63" r="5" class="ic"/><path d="M1432 67L1428 72" stroke="#ddd" stroke-width="1.300"/>
<text x="1449" y="68" textLength="38" lengthAdjust="spacingAndGlyphs" style="fill:#6f6f6f">Search</text>
<rect x="1561" y="56" width="33" height="21" rx="4" fill="none" stroke="#3a3a3a"/>
<path d="M1564 59H1578L1573 67V74L1569 71V67Z" class="ic"/><path class="chev" d="M1584 64L1587 67L1590 64"/>

<rect x="1325" y="247" width="275" height="21" fill="#2f4f8c"/>
<rect x="1362" y="244" width="20" height="24" rx="4" fill="#58749f"/>
<rect x="1453" y="248" width="20" height="19" rx="4" fill="#2f7f8f"/>
<g fill="#e4e4e4"><circle cx="1331" cy="91" r="2.200"/><circle cx="1331" cy="112" r="2.200"/><circle cx="1331" cy="174" r="2.200"/><circle cx="1331" cy="195" r="2.200"/><circle cx="1331" cy="216" r="2.200"/><circle cx="1331" cy="237" r="2.200"/><circle cx="1331" cy="298" r="2.200"/></g>
<path d="M1350 85V242" stroke="#4a4a4a"/>
<path class="chev" d="M1370 86L1374 91L1370 96M1370 107L1374 112L1370 117M1370 128L1374 133L1370 138M1370 149L1374 154L1370 159M1370 169L1374 174L1370 179M1370 190L1374 195L1370 200M1370 211L1374 216L1370 221M1349 252L1353 257L1349 262M1349 273L1353 278L1349 283M1349 293L1353 298L1349 303"/>
<path d="M1370 232L1374 237L1370 242" fill="none" stroke="#6a6a6a" stroke-width="1.200"/>
<use href="#tri" x="1392" y="91"/><use href="#tri" x="1392" y="112"/>
<path d="M1386 127Q1399 126 1398 133Q1397 140 1386 139" fill="none" stroke="#d98c45" stroke-width="3"/>
<use href="#emp" x="1392" y="154"/>
<use href="#tri" x="1392" y="174"/><use href="#tri" x="1392" y="195"/><use href="#tri" x="1392" y="216"/>
<g opacity=".5"><use href="#tri" x="1392" y="237"/><use href="#emp" x="1371" y="278"/></g>
<use href="#tri" x="1371" y="257"/>
<use href="#tri" x="1371" y="299"/>
<text x="1407" y="95" textLength="82" lengthAdjust="spacingAndGlyphs">Anouncer thing</text>
<text x="1407" y="116" textLength="98" lengthAdjust="spacingAndGlyphs">bottom stand loop</text>
<text x="1407" y="137" textLength="31" lengthAdjust="spacingAndGlyphs">curve</text>
<text x="1407" y="158" textLength="34" lengthAdjust="spacingAndGlyphs">Empty</text>
<text x="1407" y="179" textLength="60" lengthAdjust="spacingAndGlyphs">Field Goals</text>
<text x="1407" y="200" textLength="26" lengthAdjust="spacingAndGlyphs">Main</text>
<text x="1407" y="221" textLength="62" lengthAdjust="spacingAndGlyphs">Stands.001</text>
<text x="1407" y="241" textLength="49" lengthAdjust="spacingAndGlyphs" style="fill:#7a7a7a">Windows</text>
<text x="1387" y="262" textLength="44" lengthAdjust="spacingAndGlyphs" style="fill:#f0b040">Cylinder</text>
<text x="1387" y="283" textLength="59" lengthAdjust="spacingAndGlyphs" style="fill:#7a7a7a">Empty.001</text>
<text x="1387" y="304" textLength="31" lengthAdjust="spacingAndGlyphs" style="fill:#7a7a7a">Plane</text>
<use href="#mesh" x="1520" y="90"/>
<path d="M1477 124Q1475 123 1472 125Q1480 125 1478 132Q1476 139 1465 137" fill="none" stroke="#17a67e" stroke-width="1.300"/><circle cx="1473" cy="125" r="1.800" fill="#222" stroke="#17a67e"/><circle cx="1465" cy="137" r="1.800" fill="#222" stroke="#17a67e"/>
<use href="#empc" x="1472" y="153"/>
<use href="#wr" x="1498" y="174"/><use href="#mesh" x="1519" y="174"/>
<use href="#mesh" x="1464" y="194"/>
<use href="#wr" x="1501" y="215"/><use href="#mesh" x="1522" y="214"/>
<g opacity=".6"><use href="#mesh" x="1487" y="235"/><use href="#empc" x="1477" y="278"/></g>
<use href="#mesh" x="1463" y="257"/>
<use href="#mesh" x="1448" y="298"/>
<g><use href="#eye" x="1560" y="91"/><use href="#eye" x="1560" y="112"/><use href="#eye" x="1560" y="133"/><use href="#eye" x="1560" y="154"/><use href="#eye" x="1560" y="174"/><use href="#eye" x="1560" y="195"/><use href="#eye" x="1560" y="216"/><use href="#eye" x="1560" y="257"/><use href="#eye" x="1560" y="298"/>
<use href="#cam" x="1581" y="91"/><use href="#cam" x="1581" y="112"/><use href="#cam" x="1581" y="133"/><use href="#cam" x="1581" y="154"/><use href="#cam" x="1581" y="174"/><use href="#cam" x="1581" y="195"/><use href="#cam" x="1581" y="216"/><use href="#cam" x="1581" y="237"/><use href="#cam" x="1581" y="257"/><use href="#cam" x="1581" y="278"/><use href="#cam" x="1581" y="298"/></g>
<path d="M1554 237Q1560 243 1567 237M1554 278Q1560 284 1567 278" fill="none" stroke="#bbb" stroke-width="1.200"/>
<rect x="1327" y="252" width="10" height="10" fill="none" stroke="#ccc" stroke-dasharray="2 2"/><rect x="1334" y="250" width="4" height="4" fill="#fff"/>
<rect x="1596" y="110" width="3" height="130" fill="#3c3c3c"/>
<rect x="1340" y="295" width="240" height="3" fill="#4a4a4a"/>
</g>

<!-- PROPERTIES -->
<rect x="1325" y="303" width="275" height="522" rx="6" fill="#303030"/>
<rect x="1325" y="329" width="29" height="496" fill="#1d1d1d"/>
<rect x="1325" y="303" width="275" height="26" fill="#2a2a2a"/>
<rect x="1338" y="307" width="14" height="7" rx="3.500" fill="#ddd"/><rect x="1338" y="316" width="14" height="7" rx="3.500" fill="#ddd"/>
<path class="chev" d="M1357 314L1360 317L1363 314"/>
<rect x="1398" y="306" width="122" height="19" rx="4" fill="#1c1c1c"/>
<circle cx="1412" cy="314" r="5" class="ic"/><path d="M1408 318L1404 323" stroke="#ddd" stroke-width="1.300"/>
<text x="1424" y="319" textLength="38" lengthAdjust="spacingAndGlyphs" style="fill:#6f6f6f">Search</text>
<rect x="1573" y="306" width="24" height="19" rx="4" fill="#232323"/><path class="chev" d="M1582 314L1585 317L1588 314"/>
<rect x="1327" y="557" width="28" height="29" rx="4" fill="#303030"/>
<!-- tabs -->
<g transform="translate(1341 352)"><path d="M-5 -8V2M-5 2V8M4 -8V8M0 -8Q0 -3 4 -3Q8 -3 8 -8" fill="none" stroke="#ddd" stroke-width="2"/><circle cx="-5" cy="4" r="3" fill="#ddd"/></g>
<g transform="translate(1341 389)"><rect x="-7" y="-5" width="14" height="11" rx="1" fill="none" stroke="#ddd" stroke-width="1.500"/><rect x="-5" y="-3" width="6" height="7" fill="#ddd"/><path d="M-3 -7H3" stroke="#ddd" stroke-width="2"/></g>
<g transform="translate(1341 418)"><path d="M-7 -6H7V1H-7Z" fill="#cfcfcf"/><rect x="-4" y="-1" width="8" height="8" fill="#888"/><path d="M-2 5L1 1L3 5Z" fill="#333"/></g>
<g transform="translate(1341 447)"><rect x="-3" y="-7" width="10" height="10" fill="#ccc"/><path d="M-5 -4V5H4M-7 -1V7H1" fill="none" stroke="#999"/></g>
<g transform="translate(1341 476)"><path d="M-2 -7L-7 3A3.500 3.500 0 0 0 0 3Z" fill="#ddd"/><circle cx="5" cy="-5" r="2" fill="#ddd"/><circle cx="4" cy="4" r="3.500" fill="none" stroke="#ddd"/></g>
<g transform="translate(1341 506)"><circle r="7" fill="#a94a5e"/><circle r="7.500" fill="none" stroke="#c4506a" stroke-dasharray="3 1"/><path d="M-3 -5L3 -2L0 2L3 5L-2 5L-5 -1Z" fill="#3a1f26"/></g>
<g transform="translate(1341 543)"><rect x="-5" y="-5" width="10" height="10" fill="#d98c45"/><rect x="-7.500" y="-7.500" width="15" height="15" fill="none" stroke="#888" stroke-dasharray="3 8"/></g>
<g transform="translate(1341 571)"><path d="M7 -8A4.500 4.500 0 0 0 1 -3L-6 4A2.300 2.300 0 0 0 -3 7L4 1A4.500 4.500 0 0 0 8 -5L5 -3L4 -6Z" fill="#5f94e8"/></g>
<g transform="translate(1341 601)"><path d="M-5 -5L6 -5M-5 -5L-5 6M-5 -5L6 6" stroke="#6e8fd0" stroke-width="1.300"/><circle cx="-5" cy="-5" r="2.500" fill="#6e8fd0"/><circle cx="6" cy="-5" r="1.800" fill="#6e8fd0"/><circle cx="-5" cy="6" r="1.800" fill="#6e8fd0"/><circle cx="6" cy="6" r="1.800" fill="#6e8fd0"/></g>
<g transform="translate(1341 630)"><circle r="3.500" fill="#6e8fd0"/><path d="M4 -6A7 7 0 1 0 6.500 4" fill="none" stroke="#6e8fd0" stroke-width="1.500"/><circle cx="5" cy="-5" r="1.800" fill="#6e8fd0"/></g>
<g transform="translate(1341 659)"><path d="M7 -7L-5 -3A5 5 0 1 0 3 3Z" fill="none" stroke="#6e8fd0" stroke-width="1.600"/><circle cx="-2" cy="2" r="2.200" fill="#6e8fd0"/></g>
<g transform="translate(1341 688)"><use href="#mesh"/></g>
<g transform="translate(1341 717)"><circle r="7" fill="#c9697c"/><path d="M0 0V-7A7 7 0 0 1 7 0Z" fill="#2c1a1e"/><path d="M0 0H7A7 7 0 0 1 0 7Z" fill="#e6c8ce"/></g>
<g transform="translate(1341 754)"><rect x="-7" y="-7" width="14" height="14" fill="#a84e62"/><path d="M-7 -7h3.500v3.500h-3.500zM0 -7h3.500v3.500h-3.500zM-3.500 -3.500h3.500v3.500h-3.500zM3.500 -3.500h3.500v3.500h-3.500zM-7 0h3.500v3.500h-3.500zM0 0h3.500v3.500h-3.500zM-3.500 3.500h3.500v3.500h-3.500zM3.500 3.500h3.500v3.500h-3.500z" fill="#3a2228"/></g>

<rect x="1369" y="342" width="10" height="10" fill="#eee"/><rect x="1366" y="339" width="16" height="16" fill="none" stroke="#aaa" stroke-dasharray="3 10"/>
<text x="1390" y="352" textLength="45" lengthAdjust="spacingAndGlyphs">Cylinder</text>
<path d="M1577 356L1583 350M1581 341L1589 349L1584 351L1579 346Z" fill="none" stroke="#777"/>
<rect x="1363" y="376" width="230" height="19" rx="3" fill="#545454"/>
<path d="M1370 385.500H1380M1375 380.500V390.500" stroke="#ddd" stroke-width="1.200"/>
<text x="1453" y="390" textLength="67" lengthAdjust="spacingAndGlyphs" style="fill:#e6e6e6">Add Modifier</text>

<!-- TIMELINE -->
<rect x="0" y="768" width="1322" height="58" rx="5" fill="#303030"/>
<rect x="0" y="795" width="1322" height="31" fill="#1b1b1b"/>
<rect x="10" y="772" width="31" height="21" rx="4" fill="#282828"/>
<circle cx="20" cy="782" r="6.500" fill="#e6e6e6"/><path d="M20 782L24 776.500L26 782Z" fill="#282828"/><path d="M20 782L24 787" stroke="#282828"/>
<path class="chev" d="M32 781L35 784L38 781"/>
<rect x="48" y="772" width="75" height="21" rx="3" fill="#282828"/>
<text x="55" y="787" textLength="51" lengthAdjust="spacingAndGlyphs">Playback</text>
<path class="chev" d="M114 782L117 785L120 782"/>
<rect x="125" y="772" width="62" height="21" rx="3" fill="#282828"/>
<text x="132" y="787" textLength="36" lengthAdjust="spacingAndGlyphs">Keying</text>
<path class="chev" d="M178 782L181 785L184 782"/>
<text class="mu" x="197" y="787" textLength="27" lengthAdjust="spacingAndGlyphs">View</text>
<text class="mu" x="239" y="787" textLength="39" lengthAdjust="spacingAndGlyphs">Marker</text>
<rect x="565" y="772" width="36" height="20" rx="3" fill="#3d3d3d"/><circle cx="574" cy="782" r="5" fill="none" stroke="#7a7a7a" stroke-width="1.200"/><path d="M590 780.500L593 783.500L596 780.500" fill="none" stroke="#5a5a5a"/>
<rect x="612" y="772" width="124" height="20" rx="4" fill="#4a4a4a"/>
<g fill="#f0f0f0">
<path d="M617 776H619V788H617ZM628 776V788L620 782Z"/>
<path d="M638 782L642 777L646 782L642 787ZM649 777L653 782L649 787L646 782ZM655 782L658 777V787Z"/>
<path d="M670 776V788L662 782Z"/>
<path d="M680 776L689 782L680 788Z"/>
<path d="M696 777L701 782L696 787ZM707 777L711 782L707 787L703 782Z"/>
<path d="M720 776L727 782L720 788ZM727 776H729V788H727Z"/>
</g>
<path stroke="#3a3a3a" d="M632 772V792M653 772V792M673 772V792M693 772V792M714 772V792"/>
<rect x="1030" y="772" width="76" height="20" rx="4" fill="#4d4d4d"/>
<text x="1063" y="787" textLength="7" lengthAdjust="spacingAndGlyphs">1</text>
<rect x="1112" y="772" width="201" height="20" rx="4" fill="#4d4d4d"/>
<path stroke="#303030" d="M1132 772V792M1225 772V792"/>
<circle cx="1121" cy="784" r="6" class="ic"/><path d="M1121 780V784L1124 785M1119 775H1123" class="ic"/>
<text x="1148" y="787" textLength="26" lengthAdjust="spacingAndGlyphs">Start</text>
<text x="1204" y="787" textLength="7" lengthAdjust="spacingAndGlyphs">1</text>
<text x="1241" y="787" textLength="20" lengthAdjust="spacingAndGlyphs">End</text>
<text x="1277" y="787" textLength="22" lengthAdjust="spacingAndGlyphs">250</text>

<g text-anchor="middle">
<text x="93" y="812" style="fill:#a8a8a8">10</text><text x="142.500" y="812" style="fill:#a8a8a8">20</text><text x="192" y="812" style="fill:#a8a8a8">30</text><text x="241" y="812" style="fill:#a8a8a8">40</text><text x="289" y="812" style="fill:#a8a8a8">50</text><text x="339" y="812" style="fill:#a8a8a8">60</text><text x="388" y="812" style="fill:#a8a8a8">70</text><text x="437" y="812" style="fill:#a8a8a8">80</text><text x="486" y="812" style="fill:#a8a8a8">90</text><text x="536" y="812" style="fill:#a8a8a8">100</text><text x="585" y="812" style="fill:#a8a8a8">110</text><text x="634" y="812" style="fill:#a8a8a8">120</text><text x="683" y="812" style="fill:#a8a8a8">130</text><text x="732" y="812" style="fill:#a8a8a8">140</text><text x="781" y="812" style="fill:#a8a8a8">150</text><text x="830" y="812" style="fill:#a8a8a8">160</text><text x="879.500" y="812" style="fill:#a8a8a8">170</text><text x="928.500" y="812" style="fill:#a8a8a8">180</text><text x="978" y="812" style="fill:#a8a8a8">190</text><text x="1027" y="812" style="fill:#a8a8a8">200</text><text x="1076" y="812" style="fill:#a8a8a8">210</text><text x="1125" y="812" style="fill:#a8a8a8">220</text><text x="1174" y="812" style="fill:#a8a8a8">230</text><text x="1223" y="812" style="fill:#a8a8a8">240</text><text x="1272" y="812" style="fill:#a8a8a8">250</text>
</g>
<rect x="10" y="819" width="1302" height="7" fill="#383838"/>
<path stroke="#262626" d="M93 819V826M142 819V826M192 819V826M241 819V826M289 819V826M339 819V826M388 819V826M437 819V826M486 819V826M536 819V826M585 819V826M634 819V826M683 819V826M732 819V826M781 819V826M830 819V826M880 819V826M929 819V826M978 819V826M1027 819V826M1076 819V826M1125 819V826M1174 819V826M1223 819V826M1272 819V826"/>
<rect x="37" y="798" width="25" height="18" rx="3" fill="#4772b3"/>
<text x="49" y="812" text-anchor="middle" style="fill:#fff">1</text>
<path d="M49 816V826" stroke="#4772b3" stroke-width="1.200"/>

<!-- status -->
<rect y="826" width="1600" height="24" fill="#161616"/>
<text x="1559" y="843" textLength="28" lengthAdjust="spacingAndGlyphs" style="fill:#8a8a8a;font-size:12px">4.5.4</text>
</svg>
</body></html>
